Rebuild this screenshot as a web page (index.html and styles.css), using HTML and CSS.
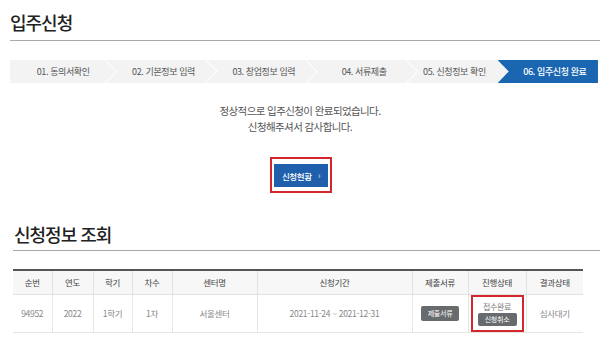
FILE: index.html
```html
<!DOCTYPE html>
<html lang="ko">
<head>
<meta charset="utf-8">
<link rel="stylesheet" href="styles.css">
</head>
<body>
<div class="page">
  <h1 class="title">입주신청</h1>
  <div class="steps">
    <div class="step">01. 동의서확인</div>
    <div class="step">02. 기본정보 입력</div>
    <div class="step">03. 창업정보 입력</div>
    <div class="step">04. 서류제출</div>
    <div class="step step5">05. 신청정보 확인</div>
    <div class="step active">06. 입주신청 완료</div>
  </div>
  <div class="message">
    <p>정상적으로 입주신청이 완료되었습니다.</p>
    <p>신청해주셔서 감사합니다.</p>
  </div>
  <div class="btn-wrap">
    <div class="highlight">
      <a class="btn-primary">신청현황<span class="arrow">›</span></a>
    </div>
  </div>
  <h2 class="title2">신청정보 조회</h2>
  <table class="list">
    <colgroup>
      <col style="width:39px"><col style="width:41px"><col style="width:39px"><col style="width:40px"><col style="width:85px"><col style="width:155px"><col style="width:56px"><col style="width:58px"><col style="width:57px">
    </colgroup>
    <thead>
      <tr><th>순번</th><th>연도</th><th>학기</th><th>차수</th><th>센터명</th><th>신청기간</th><th>제출서류</th><th>진행상태</th><th>결과상태</th></tr>
    </thead>
    <tbody>
      <tr>
        <td>94952</td><td>2022</td><td>1학기</td><td>1차</td><td>서울센터</td><td>2021-11-24 ~ 2021-12-31</td>
        <td><span class="btn-gray">제출서류</span></td>
        <td class="status"><div class="status-box"><span class="status-text">접수완료</span><span class="btn-gray small">신청취소</span></div></td>
        <td>심사대기</td>
      </tr>
    </tbody>
  </table>
</div>
</body>
</html>
```

FILE: styles.css
```css
* { box-sizing: border-box; }
html, body { margin: 0; padding: 0; background: #fff; }
body {
  font-family: "Noto Sans CJK KR", "Noto Sans", sans-serif;
  color: #333;
  width: 600px;
  height: 340px;
  overflow: hidden;
}
.page { padding-top: 10px; }
.title {
  margin: 0 0 0 10px;
  padding: 0 0 6px;
  font-size: 18px;
  line-height: 24px;
  font-weight: 500;
  letter-spacing: -1px;
  color: #222;
  border-bottom: 1px solid #aaa;
}
.steps {
  display: flex;
  margin: 19px 2px 0 10px;
  height: 23px;
  background: #f3f3f3;
}
.step {
  flex: 1;
  position: relative;
  display: flex;
  align-items: center;
  justify-content: center;
  padding-left: 10px;
  font-size: 9px;
  letter-spacing: -0.4px;
  color: #555;
}
.step + .step { padding-left: 14px; }
.step.step5 { padding-left: 4px; }
.step + .step::before {
  content: "";
  position: absolute;
  left: -2px;
  top: 0;
  width: 13px;
  height: 100%;
  background: #fdfdfd;
  clip-path: polygon(0 0, 1.5px 0, 13px 50%, 1.5px 100%, 0 100%, 11.5px 50%);
}
.step.active {
  background: #1b66b1;
  color: #fff;
  font-weight: 500;
  clip-path: polygon(0 0, 100% 0, 100% 100%, 0 100%, 11px 50%);
}
.message {
  margin-top: 20px;
  text-align: center;
  font-size: 10.5px;
  line-height: 16px;
  letter-spacing: -0.6px;
  color: #555;
}
.message p { margin: 0; }
.btn-wrap {
  display: flex;
  justify-content: center;
  margin-top: 22px;
  padding-left: 2px;
}
.highlight {
  border: 2px solid #d3262d;
  padding: 5px 2px 4px;
}
.btn-primary {
  display: flex;
  align-items: center;
  justify-content: center;
  width: 54px;
  height: 23px;
  background: #1f5fab;
  color: #fff;
  font-size: 8.5px;
  font-weight: 500;
  letter-spacing: -0.4px;
}
.btn-primary .arrow { margin-left: 6px; font-size: 9px; opacity: 0.75; }
.title2 {
  margin: 29px 0 0 13px;
  padding: 0 0 4px 1px;
  font-size: 18px;
  line-height: 24px;
  font-weight: 500;
  letter-spacing: -1px;
  color: #222;
  border-bottom: 1px solid #aaa;
}
.list {
  margin: 18px 0 0 13px;
  width: 570px;
  border-collapse: collapse;
  table-layout: fixed;
  border-top: 2px solid #555;
}
.list th {
  height: 24px;
  padding: 0;
  font-size: 8.5px;
  font-weight: 400;
  letter-spacing: -0.3px;
  color: #444;
  background: #f7f7f7;
  border-left: 1px solid #e2e2e2;
  border-bottom: 1px solid #e2e2e2;
}
.list td {
  height: 37px;
  padding: 0;
  text-align: center;
  font-size: 8.5px;
  letter-spacing: -0.3px;
  color: #888;
  border-left: 1px solid #e6e6e6;
  border-bottom: 1px solid #e6e6e6;
}
.list th:first-child, .list td:first-child { border-left: none; }
.btn-gray {
  display: inline-flex;
  align-items: center;
  justify-content: center;
  width: 38px;
  height: 15px;
  background: #676b6d;
  color: #fff;
  font-size: 7px;
  border-radius: 2px;
  letter-spacing: -0.3px;
}
.list td.status { padding: 0 2px; }
.status-box {
  height: 37px;
  border: 2px solid #d3262d;
  display: flex;
  flex-direction: column;
  align-items: center;
  justify-content: center;
  gap: 1px;
}
.status-text { font-size: 8px; line-height: 11px; color: #777; }
.btn-gray.small { width: 39px; height: 13px; }
```
